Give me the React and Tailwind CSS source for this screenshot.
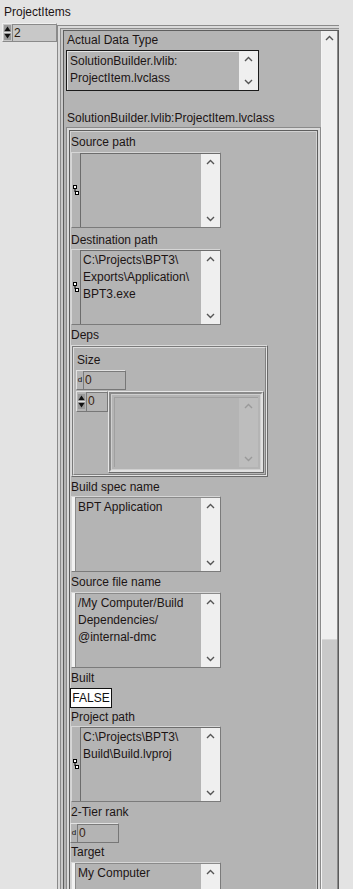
import React from "react";

const Chevron = ({ dir = "up", color = "#555" }) => (
  <svg width="9" height="6" viewBox="0 0 9 6" className="block">
    {dir === "up" ? (
      <path d="M1 5 L4.5 1.5 L8 5" fill="none" stroke={color} strokeWidth="1.4" />
    ) : (
      <path d="M1 1 L4.5 4.5 L8 1" fill="none" stroke={color} strokeWidth="1.4" />
    )}
  </svg>
);

const PathIcon = () => (
  <svg width="7" height="11" viewBox="0 0 7 11" className="block">
    <rect x="0.5" y="0.5" width="3" height="3" fill="#fff" stroke="#000" />
    <path d="M2 3.5 V7" stroke="#000" />
    <rect x="2.5" y="6.5" width="3" height="3" fill="#fff" stroke="#000" />
  </svg>
);

const IncDec = () => (
  <svg width="7" height="15" viewBox="0 0 7 15" className="block">
    <rect x="0" y="0" width="7" height="15" fill="#9a9a9a" />
    <path d="M0.5 6 L3.5 1.5 L6.5 6 Z" fill="#111" />
    <path d="M0.5 9 L3.5 13.5 L6.5 9 Z" fill="#111" />
    <path d="M0 7.5 H7" stroke="#e0e0e0" />
  </svg>
);

function Label({ children, className = "" }) {
  return (
    <div className={`h-[17px] leading-[17px] text-[12px] text-[#1c1414] whitespace-nowrap ${className}`}>
      {children}
    </div>
  );
}

function BoxScroll({ dim = false }) {
  return (
    <div
      className={`flex w-[19px] flex-col items-center justify-between py-[5px] ${
        dim ? "bg-[#bdbdbd]" : "bg-[#efefef]"
      }`}
    >
      <Chevron dir="up" color={dim ? "#9a9a9a" : "#555"} />
      <Chevron dir="down" color={dim ? "#9a9a9a" : "#555"} />
    </div>
  );
}

function PathBox({ lines = [], className = "" }) {
  return (
    <div
      className={`flex h-[76px] w-[150px] border border-[#d6d6d6] border-b-[#7b7b7b] border-r-[#7b7b7b] ${className}`}
    >
      <div className="flex w-[8px] items-center justify-start pl-[1px]">
        <PathIcon />
      </div>
      <div className="flex flex-1 border-l border-t border-[#6c6c6c] border-b-[#e6e6e6]">
        <div className="flex-1 pl-[2px] pt-[1px] text-[12px] leading-[17px] text-[#1c1414]">
          {lines.map((l) => (
            <div key={l} className="whitespace-nowrap">
              {l}
            </div>
          ))}
        </div>
        <BoxScroll />
      </div>
    </div>
  );
}

function StringBox({ lines = [], className = "" }) {
  return (
    <div
      className={`flex h-[76px] w-[150px] border border-[#d6d6d6] border-b-[#7b7b7b] border-r-[#7b7b7b] ${className}`}
    >
      <div className="w-[3px] bg-[#f2f2f2]" />
      <div className="flex flex-1 border-l border-t border-[#8a8a8a]">
        <div className="flex-1 pl-[2px] pt-[1px] text-[12px] leading-[17px] text-[#1c1414]">
          {lines.map((l) => (
            <div key={l} className="whitespace-nowrap">
              {l}
            </div>
          ))}
        </div>
        <BoxScroll />
      </div>
    </div>
  );
}

function Numeric({ value, className = "" }) {
  return (
    <div
      className={`flex h-[20px] border border-[#e2e2e2] border-b-[#777] border-r-[#777] ${className}`}
    >
      <div className="flex w-[6px] items-center justify-center text-[8px] leading-none text-[#111]">
        d
      </div>
      <div className="flex-1 border-l border-t border-[#7a7a7a] border-b-[#dcdcdc] border-r-[#dcdcdc] pl-[1px] text-[12px] leading-[16px] text-[#3a2410]">
        {value}
      </div>
    </div>
  );
}

export default function App() {
  return (
    <div className="relative h-[889px] w-[353px] overflow-hidden bg-[#e3e3e3] font-['Liberation_Sans',Arial,sans-serif] text-[12px] text-[#1c1414]">
      <Label className="pl-[4px] pt-[4px] h-[21px]">ProjectItems</Label>

      <div className="flex items-start pl-[2px] pt-[2px]">
        {/* array index */}
        <div className="flex h-[19px] w-[55px] border border-[#f0f0f0] border-b-[#8a8a8a] border-r-[#8a8a8a] bg-[#c8c8c8]">
          <div className="pl-[1px] pt-[1px]">
            <IncDec />
          </div>
          <div className="ml-[1px] flex-1 border-l border-t border-[#8a8a8a] pl-[1px] text-[12px] leading-[16px] text-[#2a1a10]">
            2
          </div>
        </div>

        {/* array element frame */}
        <div className="mt-[2px] h-[870px] w-[282px] border-l border-t border-[#8a8a8a]">
          <div className="h-full border-l-2 border-t-2 border-[#dadada]">
            <div className="h-full border-l border-t border-[#8c8c8c]">
              <div className="h-full border-l-2 border-t border-[#c9c9c9]">
                <div className="flex h-full border-l border-t border-[#5e5e5e] bg-[#b4b4b4]">
                  {/* outer cluster content */}
                  <div className="flex-1 pl-[1px] pt-[1px]">
                    <Label className="pl-[2px]">Actual Data Type</Label>
                    <div className="ml-[1px] mt-[1px] flex h-[41px] w-[193px] border border-[#1a1a1a]">
                      <div className="flex-1 border-l border-t border-[#e6e6e6] pl-[2px] pt-[1px] text-[12px] leading-[17px]">
                        <div>SolutionBuilder.lvlib:</div>
                        <div>ProjectItem.lvclass</div>
                      </div>
                      <BoxScroll />
                    </div>
                    <Label className="mt-[19px] pl-[2px]">
                      SolutionBuilder.lvlib:ProjectItem.lvclass
                    </Label>

                    {/* inner cluster frame */}
                    <div className="ml-[1px] mt-[0px] h-[800px] w-[255px] border border-[#8a8a8a] border-b-0">
                      <div className="h-full border-2 border-[#dadada] border-b-0">
                        <div className="h-full border border-[#5e5e5e] border-b-0">
                          <div className="h-full border border-[#d2d2d2] border-b-0 pl-[0px] pt-[2px]">
                            <Label>Source path</Label>
                            <PathBox className="mt-[1px]" />
                            <Label className="mt-[4px]">Destination path</Label>
                            <PathBox
                              lines={["C:\\Projects\\BPT3\\", "Exports\\Application\\", "BPT3.exe"]}
                            />
                            <Label className="mt-[2px]">Deps</Label>

                            {/* Deps cluster */}
                            <div className="mt-[1px] h-[132px] w-[197px] border border-[#dadada] border-b-[#6a6a6a] border-r-[#6a6a6a]">
                              <div className="h-full border border-[#7a7a7a] border-b-[#e4e4e4] border-r-[#e4e4e4]">
                                <div className="h-full border border-[#dcdcdc] border-b-[#808080] border-r-[#808080] pl-[2px] pt-[4px]">
                                  <Label className="pl-[1px]">Size</Label>
                                  <Numeric value="0" className="mt-[1px] w-[50px]" />
                                  <div className="mt-[1px] flex items-start">
                                    <div className="flex h-[21px] w-[32px] border border-[#e2e2e2] border-b-[#777] border-r-[#777]">
                                      <div className="pl-[1px] pt-[2px]">
                                        <IncDec />
                                      </div>
                                      <div className="ml-[1px] flex-1 border-l border-t border-[#7a7a7a] text-[12px] leading-[17px] text-[#3a2410] pl-[1px]">
                                        0
                                      </div>
                                    </div>
                                    <div className="h-[82px] w-[156px] border border-[#e6e6e6] border-b-[#6a6a6a] border-r-[#6a6a6a]">
                                      <div className="h-full border-2 border-[#8a8a8a] border-b-[#e0e0e0] border-r-[#e0e0e0]">
                                        <div className="flex h-full border border-[#cfcfcf] p-[2px]">
                                          <div className="flex flex-1 border-l border-t border-[#a0a0a0]">
                                            <div className="flex-1" />
                                            <BoxScroll dim />
                                          </div>
                                        </div>
                                      </div>
                                    </div>
                                  </div>
                                </div>
                              </div>
                            </div>

                            <Label className="mt-[2px]">Build spec name</Label>
                            <StringBox className="mt-[0px]" lines={["BPT Application"]} />
                            <Label className="mt-[2px]">Source file name</Label>
                            <StringBox
                              className="mt-[1px]"
                              lines={["/My Computer/Build", "Dependencies/", "@internal-dmc"]}
                            />
                            <Label className="mt-[2px]">Built</Label>
                            <div className="-ml-[1px] mt-[1px] h-[20px] w-[42px] border border-[#111] bg-white text-center text-[12px] leading-[18px] text-[#111]">
                              FALSE
                            </div>
                            <Label className="mt-[1px]">Project path</Label>
                            <PathBox lines={["C:\\Projects\\BPT3\\", "Build\\Build.lvproj"]} />
                            <Label className="mt-[2px]">2-Tier rank</Label>
                            <Numeric value="0" className="-ml-[1px] mt-[2px] w-[49px]" />
                            <Label className="mt-[1px]">Target</Label>
                            <StringBox className="mt-[1px]" lines={["My Computer"]} />
                          </div>
                        </div>
                      </div>
                    </div>
                  </div>

                  {/* outer scrollbar */}
                  <div className="flex w-[17px] flex-col border-l border-[#f4f4f4]">
                    <div className="flex h-[608px] flex-col items-center bg-[#efefef] pt-[4px]">
                      <Chevron dir="up" />
                    </div>
                    <div className="flex-1 border-t border-[#d8d8d8] bg-[#c9c9c9]" />
                  </div>
                  <div className="w-[1px] bg-[#8a8a8a]" />
                  <div className="w-[1px] bg-[#5a5a5a]" />
                </div>
              </div>
            </div>
          </div>
        </div>
      </div>
    </div>
  );
}
